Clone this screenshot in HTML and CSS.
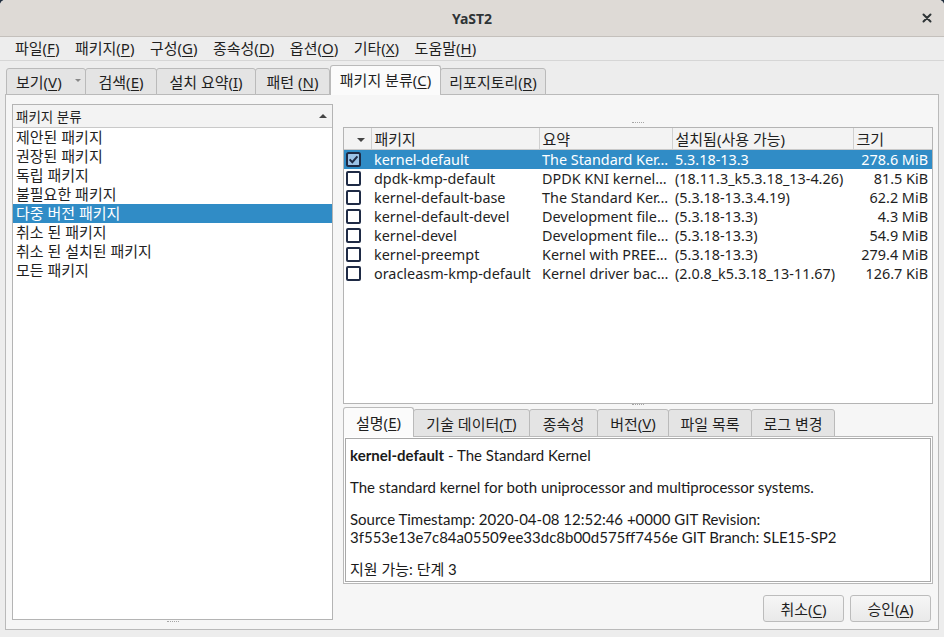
FILE: index.html
```html
<!DOCTYPE html>
<html lang="ko">
<head>
<meta charset="utf-8">
<title>YaST2</title>
<link rel="stylesheet" href="styles.css">
</head>
<body>
<div class="window">
  <header class="titlebar">
    <span></span>
    <span class="title">YaST2</span>
    <span class="close"><svg width="10" height="10" viewBox="0 0 10 10"><path d="M1.5 1.5 L8.5 8.5 M8.5 1.5 L1.5 8.5" stroke="#2e3436" stroke-width="2" stroke-linecap="round"/></svg></span>
  </header>
  <nav class="menubar">
    <span>파일(<u>F</u>)</span>
    <span>패키지(<u>P</u>)</span>
    <span>구성(<u>G</u>)</span>
    <span>종속성(<u>D</u>)</span>
    <span>옵션(<u>O</u>)</span>
    <span>기타(<u>X</u>)</span>
    <span>도움말(<u>H</u>)</span>
  </nav>
  <div class="tabbar">
    <div class="tab t-view">보기(<u>V</u>)<span class="drop"></span></div>
    <div class="tab t-search">검색(<u>E</u>)</div>
    <div class="tab t-summary">설치 요약(<u>I</u>)</div>
    <div class="tab t-pattern">패턴 (<u>N</u>)</div>
    <div class="tab active t-class">패키지 분류(<u>C</u>)</div>
    <div class="tab t-repo">리포지토리(<u>R</u>)</div>
  </div>
  <div class="panel">
    <div class="left">
      <div class="listbox">
        <div class="list-head"><span>패키지 분류</span><span class="sort-up"></span></div>
        <ul class="list">
          <li>제안된 패키지</li>
          <li>권장된 패키지</li>
          <li>독립 패키지</li>
          <li>불필요한 패키지</li>
          <li class="sel">다중 버전 패키지</li>
          <li>취소 된 패키지</li>
          <li>취소 된 설치된 패키지</li>
          <li>모든 패키지</li>
        </ul>
      </div>
      <div class="hsplit"><span class="grip"></span></div>
    </div>
    <div class="right">
      <div class="topgap"><span class="grip"></span></div>
      <div class="pkgbox">
        <table class="pkgtable">
          <colgroup>
            <col class="c-chk"><col class="c-name"><col class="c-sum"><col class="c-ver"><col class="c-size">
          </colgroup>
          <thead>
            <tr>
              <th class="chk-h"><span class="sort-down"></span></th>
              <th>패키지</th>
              <th>요약</th>
              <th>설치됨(사용 가능)</th>
              <th class="last">크기</th>
            </tr>
          </thead>
          <tbody>
            <tr class="sel">
              <td class="chk"><svg width="15" height="15" viewBox="0 0 15 15"><rect x="1" y="1" width="13" height="13" rx="1.5" fill="#9cc2e6" stroke="#1e2a45" stroke-width="2"/><path d="M3.6 7.4 L6.3 10.2 L11.4 4.4" fill="none" stroke="#1e2a45" stroke-width="2"/></svg></td>
              <td>kernel-default</td><td>The Standard Ker…</td><td>5.3.18-13.3</td><td class="num">278.6 MiB</td>
            </tr>
            <tr>
              <td class="chk"><span class="box"></span></td>
              <td>dpdk-kmp-default</td><td>DPDK KNI kernel…</td><td>(18.11.3_k5.3.18_13-4.26)</td><td class="num">81.5 KiB</td>
            </tr>
            <tr>
              <td class="chk"><span class="box"></span></td>
              <td>kernel-default-base</td><td>The Standard Ker…</td><td>(5.3.18-13.3.4.19)</td><td class="num">62.2 MiB</td>
            </tr>
            <tr>
              <td class="chk"><span class="box"></span></td>
              <td>kernel-default-devel</td><td>Development file…</td><td>(5.3.18-13.3)</td><td class="num">4.3 MiB</td>
            </tr>
            <tr>
              <td class="chk"><span class="box"></span></td>
              <td>kernel-devel</td><td>Development file…</td><td>(5.3.18-13.3)</td><td class="num">54.9 MiB</td>
            </tr>
            <tr>
              <td class="chk"><span class="box"></span></td>
              <td>kernel-preempt</td><td>Kernel with PREE…</td><td>(5.3.18-13.3)</td><td class="num">279.4 MiB</td>
            </tr>
            <tr>
              <td class="chk"><span class="box"></span></td>
              <td>oracleasm-kmp-default</td><td>Kernel driver bac…</td><td>(2.0.8_k5.3.18_13-11.67)</td><td class="num">126.7 KiB</td>
            </tr>
          </tbody>
        </table>
      </div>
      <div class="vgrip"><span class="grip"></span></div>
      <div class="dtabs">
        <div class="dtab active d-desc">설명(<u>E</u>)</div>
        <div class="dtab d-tech">기술 데이터(<u>T</u>)</div>
        <div class="dtab d-deps">종속성</div>
        <div class="dtab d-ver">버전(<u>V</u>)</div>
        <div class="dtab d-files">파일 목록</div>
        <div class="dtab d-log">로그 변경</div>
      </div>
      <div class="details">
        <p><b>kernel-default</b> - The Standard Kernel</p>
        <p>The standard kernel for both uniprocessor and multiprocessor systems.</p>
        <p>Source Timestamp: 2020-04-08 12:52:46 +0000 GIT Revision:<br>3f553e13e7c84a05509ee33dc8b00d575ff7456e GIT Branch: SLE15-SP2</p>
        <p>지원 가능: 단계 3</p>
      </div>
      <div class="buttons">
        <button class="btn">취소(<u>C</u>)</button>
        <button class="btn">승인(<u>A</u>)</button>
      </div>
    </div>
  </div>
</div>
</body>
</html>
```

FILE: styles.css
```css
html {
  background: #1e2c3c;
}
body {
  margin: 0;
  width: 944px;
  height: 637px;
  overflow: hidden;
  background: #ededed;
  border-radius: 5px 5px 0 0;
  font-family: "Noto Sans", "Noto Sans CJK KR", sans-serif;
  font-size: 15px;
  color: #1f1f1f;
}
.window {
  display: flex;
  flex-direction: column;
  height: 637px;
}
u { text-decoration: underline; text-underline-offset: 2px; }

/* title bar */
.titlebar {
  height: 37px;
  box-sizing: border-box;
  background: #dedad6;
  border-bottom: 1px solid #c4c0bc;
  border-radius: 5px 5px 0 0;
  display: grid;
  grid-template-columns: 1fr auto 1fr;
  align-items: center;
}
.title {
  font-weight: bold;
  font-size: 14px;
  color: #2e3436;
}
.close {
  justify-self: end;
  margin-right: 12px;
  display: flex;
}

/* menu bar */
.menubar {
  height: 24px;
  box-sizing: border-box;
  border-bottom: 1px solid #d6d6d6;
  display: flex;
  align-items: center;
  gap: 15.5px;
  padding-left: 15px;
  padding-bottom: 2px;
  font-size: 15px;
}

/* main tabs */
.tabbar {
  height: 34px;
  display: flex;
  align-items: flex-end;
  padding-left: 6px;
  position: relative;
  z-index: 1;
}
.tab {
  height: 27px;
  box-sizing: border-box;
  border: 1px solid #bababa;
  border-radius: 3px 3px 0 0;
  background: #e4e4e4;
  display: flex;
  align-items: center;
  justify-content: center;
  margin-right: -1px;
  font-size: 15px;
}
.tab.active {
  height: 30px;
  background: #fbfbfb;
  border-bottom: none;
  padding-bottom: 2px;
  margin-left: 1px;
}
.t-view { width: 80px; justify-content: flex-start; padding-left: 9px; }
.t-search { width: 72px; }
.t-summary { width: 100px; }
.t-pattern { width: 75px; }
.t-class { width: 111px; }
.t-repo { width: 106px; }
.drop {
  margin-left: 13px;
  width: 0;
  height: 0;
  border-left: 3px solid transparent;
  border-right: 3px solid transparent;
  border-top: 3px solid #888;
  margin-top: -2px;
}

/* panel */
.panel {
  margin: -1px 5px 0 5px;
  height: 536px;
  box-sizing: border-box;
  border: 1px solid #bababa;
  background: #f6f6f6;
  display: flex;
  gap: 10px;
  padding: 9px 5px 0 6px;
}
.left {
  width: 321px;
  display: flex;
  flex-direction: column;
}
.listbox {
  flex: 1;
  border: 1px solid #b4b4b4;
  background: #fff;
}
.list-head {
  height: 22px;
  border-bottom: 1px solid #c9c9c9;
  background: #f3f3f3;
  display: flex;
  align-items: center;
  justify-content: space-between;
  padding: 0 5px 0 3px;
  font-size: 13.5px;
}
.sort-up {
  width: 0;
  height: 0;
  border-left: 4px solid transparent;
  border-right: 4px solid transparent;
  border-bottom: 4px solid #444;
}
.list {
  list-style: none;
  margin: 0;
  padding: 0;
}
.list li {
  height: 19px;
  line-height: 19px;
  padding-left: 3px;
  font-size: 15px;
}
.list li.sel {
  background: #308cc6;
  color: #fff;
}
.hsplit {
  height: 9px;
  display: flex;
  justify-content: center;
  align-items: flex-start;
}
.grip {
  display: block;
  width: 12px;
  border-top: 1px dotted #a5a5a5;
  margin-top: 1px;
}

.right {
  width: 590px;
  display: flex;
  flex-direction: column;
  padding-bottom: 7px;
}
.topgap {
  height: 23px;
  display: flex;
  justify-content: center;
  align-items: flex-end;
}
.topgap .grip { margin-bottom: 4px; }
.pkgbox {
  flex: 1;
  border: 1px solid #b4b4b4;
  background: #fff;
  overflow: hidden;
}
.pkgtable {
  width: 588px;
  border-collapse: collapse;
  table-layout: fixed;
}
.c-chk { width: 27px; }
.c-name { width: 168px; }
.c-sum { width: 133px; }
.c-ver { width: 181px; }
.c-size { width: 79px; }
.pkgtable th {
  height: 21px;
  padding: 0 0 0 3px;
  border-bottom: 1px solid #c9c9c9;
  border-right: 1px solid #d0d0d0;
  background: #f3f3f3;
  font-weight: normal;
  text-align: left;
  font-size: 15px;
  white-space: nowrap;
  overflow: hidden;
}
.pkgtable th.last { border-right: none; }
.pkgtable th.chk-h { text-align: right; padding: 0 6px 0 0; }
.sort-down {
  display: inline-block;
  width: 0;
  height: 0;
  border-left: 4px solid transparent;
  border-right: 4px solid transparent;
  border-top: 4px solid #444;
  vertical-align: middle;
}
.pkgtable td {
  height: 19px;
  padding: 0 0 0 3px;
  white-space: nowrap;
  overflow: hidden;
  font-size: 14.4px;
  line-height: 19px;
}
.pkgtable td.chk {
  padding: 0 0 0 2px;
  line-height: 0;
}
.pkgtable td.num {
  text-align: right;
  padding-right: 4px;
}
.pkgtable tr.sel td {
  background: #308cc6;
  color: #fff;
}
.box {
  display: inline-block;
  width: 15px;
  height: 15px;
  box-sizing: border-box;
  border: 2px solid #1e2a45;
  border-radius: 2px;
  background: #fff;
}
.vgrip {
  height: 3px;
  display: flex;
  justify-content: center;
}
.vgrip .grip { margin-top: 0; }

/* details tabs */
.dtabs {
  height: 30px;
  display: flex;
  align-items: flex-end;
  position: relative;
  z-index: 1;
}
.dtab {
  height: 28px;
  box-sizing: border-box;
  border: 1px solid #bababa;
  border-radius: 3px 3px 0 0;
  background: #e4e4e4;
  display: flex;
  align-items: center;
  justify-content: center;
  margin-right: -1px;
  font-size: 15px;
}
.dtab.active {
  height: 30px;
  background: #fbfbfb;
  border-bottom: none;
  padding-bottom: 1px;
}
.d-desc { width: 71px; }
.d-tech { width: 117px; }
.d-deps { width: 69px; }
.d-ver { width: 72px; }
.d-files { width: 84px; }
.d-log { width: 84px; }

.details {
  margin-top: -1px;
  height: 148px;
  box-sizing: border-box;
  border: 1px solid #b8b8b8;
  box-shadow: inset 0 0 0 1px #ffffff, inset 0 0 0 2px #a9a9a9;
  background: #fff;
  padding: 9px 6px 0 6px;
  font-family: "Lato", "Noto Sans CJK KR", sans-serif;
  font-size: 15px;
  color: #1a1a1a;
}
.details p {
  margin: 0 0 14px;
  line-height: 18px;
}

.buttons {
  margin-top: 11px;
  height: 27px;
  display: flex;
  justify-content: flex-end;
  gap: 6px;
  padding-right: 2px;
}
.btn {
  width: 81px;
  height: 27px;
  box-sizing: border-box;
  border: 1px solid #bcbcbc;
  border-radius: 3px;
  background: linear-gradient(#f6f6f6, #e9e9e9);
  font-family: "Noto Sans", "Noto Sans CJK KR", sans-serif;
  font-size: 15px;
  color: #1f1f1f;
  padding: 0;
}
```
